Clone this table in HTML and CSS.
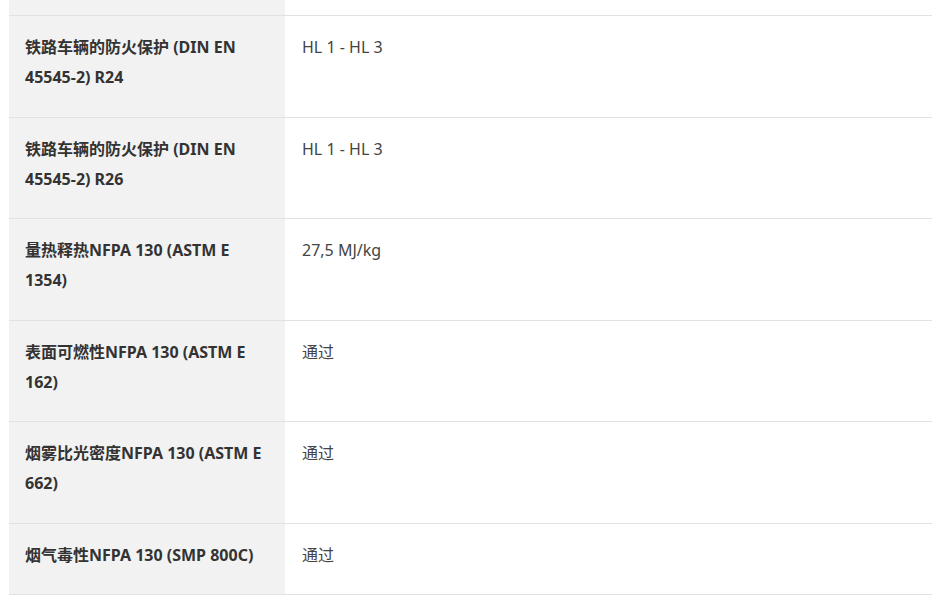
FILE: index.html
```html
<!DOCTYPE html>
<html lang="zh">
<head>
<meta charset="utf-8">
<link rel="stylesheet" href="styles.css">
</head>
<body>
<div class="table">
  <div class="row top"><div class="label"></div><div class="value"></div></div>
  <div class="row"><div class="label">铁路车辆的防火保护 (DIN EN 45545-2) R24</div><div class="value">HL 1 - HL 3</div></div>
  <div class="row"><div class="label">铁路车辆的防火保护 (DIN EN 45545-2) R26</div><div class="value">HL 1 - HL 3</div></div>
  <div class="row"><div class="label">量热释热NFPA 130 (ASTM E 1354)</div><div class="value">27,5 MJ/kg</div></div>
  <div class="row"><div class="label">表面可燃性NFPA 130 (ASTM E 162)</div><div class="value">通过</div></div>
  <div class="row"><div class="label">烟雾比光密度NFPA 130 (ASTM E 662)</div><div class="value">通过</div></div>
  <div class="row"><div class="label">烟气毒性NFPA 130 (SMP 800C)</div><div class="value">通过</div></div>
</div>
</body>
</html>
```
FILE: styles.css
```css
html, body {
  margin: 0;
  padding: 0;
  background: #fff;
}
body {
  padding-left: 9px;
  font-family: "Noto Sans", "Noto Sans CJK SC", sans-serif;
  font-size: 16px;
  line-height: 30px;
  color: #333;
}
.table {
  width: 923px;
}
.row {
  display: flex;
  border-bottom: 1px solid #e2e2e2;
}
.label {
  width: 276px;
  flex: none;
  box-sizing: border-box;
  background: #f2f2f2;
  padding: 16px 16px 24.5px 16px;
  font-weight: 700;
  color: #333;
}
.value {
  flex: 1;
  padding: 16px 16px 24.5px 17px;
  color: #444;
}
.row.top .label,
.row.top .value {
  height: 15px;
  padding: 0;
}
```
